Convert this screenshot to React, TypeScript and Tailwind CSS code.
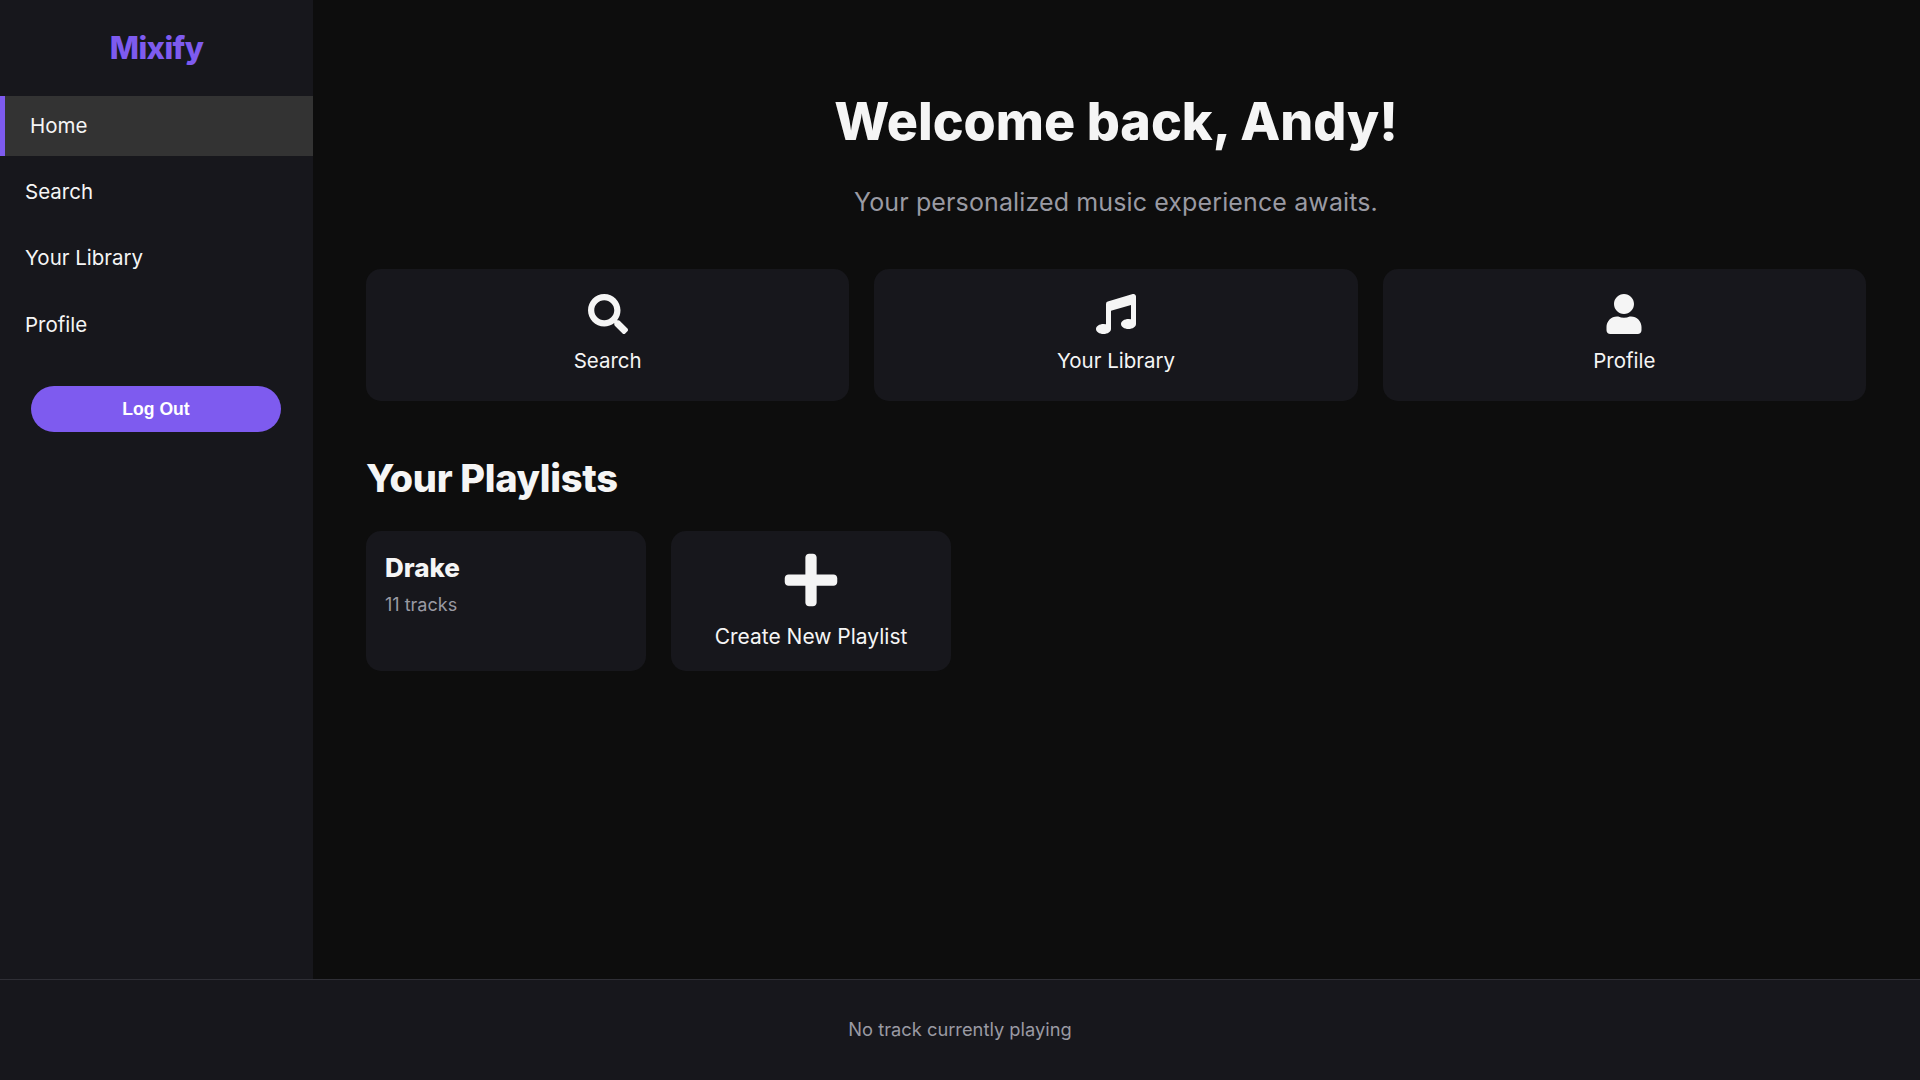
import { FaMusic, FaPlus, FaSearch, FaUser } from 'react-icons/fa';

const navItems = ['Search', 'Your Library', 'Profile'];

const quickLinks = [
  { label: 'Search', icon: FaSearch },
  { label: 'Your Library', icon: FaMusic },
  { label: 'Profile', icon: FaUser },
];

export default function App() {
  return (
    <div className="flex h-screen flex-col overflow-hidden bg-[#0d0d0d] font-['Inter',sans-serif] text-[#f5f5f5]">
      <div className="flex min-h-0 flex-1">
        {/* Sidebar */}
        <aside className="flex w-[313px] shrink-0 flex-col bg-[#17171c]">
          <h1 className="flex h-[96px] items-center justify-center text-[31px] font-extrabold tracking-[-0.6px] text-[#7e5bef]">
            Mixify
          </h1>
          <nav className="flex flex-col gap-[6.4px]">
            <a className="flex h-[60px] items-center border-l-[5px] border-[#7e5bef] bg-[#333333] pl-[25px] text-[20.5px]">
              Home
            </a>
            {navItems.map((item) => (
              <a key={item} className="flex h-[60px] items-center pl-[25px] text-[20.5px]">
                {item}
              </a>
            ))}
          </nav>
          <button className="mt-[31px] ml-[31px] h-[46px] w-[250px] rounded-full bg-[#7e5bef] font-['Liberation_Sans',sans-serif] text-[17.6px] font-bold text-white">
            Log Out
          </button>
        </aside>

        {/* Main content */}
        <main className="min-w-0 flex-1 pt-[89px] pr-px">
          <div className="mx-auto w-[1500px]">
            <h2 className="text-center text-[52px] leading-[66px] font-extrabold">Welcome back, Andy!</h2>
            <p className="mt-[29px] text-center text-[25px] leading-[36px] tracking-[0.12px] text-[#9a9aa3]">
              Your personalized music experience awaits.
            </p>

            <div className="mt-[49px] grid grid-cols-3 gap-[25px]">
              {quickLinks.map(({ label, icon: Icon }) => (
                <div key={label} className="flex h-[132px] flex-col items-center rounded-[15px] bg-[#17171c] pt-[25px]">
                  <Icon size={40} className="text-[#f5f5f5]" />
                  <span className="mt-[12px] text-[20.5px] leading-[30px]">{label}</span>
                </div>
              ))}
            </div>

            <h3 className="mt-[53px] text-[38px] leading-[48px] font-extrabold tracking-[-0.3px]">Your Playlists</h3>

            <div className="mt-[29px] flex gap-[25px]">
              <div className="h-[140px] w-[280px] rounded-[15px] bg-[#17171c] p-[19px]">
                <div className="text-[26px] leading-[36px] font-extrabold">Drake</div>
                <div className="mt-[5px] text-[18px] leading-[27px] text-[#9a9aa3]">11 tracks</div>
              </div>
              <div className="flex h-[140px] w-[280px] flex-col items-center rounded-[15px] bg-[#17171c] pt-[19px]">
                <FaPlus size={60} className="text-[#f5f5f5]" />
                <span className="mt-[12px] text-[21px] leading-[30px]">Create New Playlist</span>
              </div>
            </div>
          </div>
        </main>
      </div>

      {/* Player bar */}
      <footer className="flex h-[101px] shrink-0 items-center justify-center border-t border-[#2f2f36] bg-[#17171c] text-[18.3px] text-[#9a9aa3]">
        No track currently playing
      </footer>
    </div>
  );
}
